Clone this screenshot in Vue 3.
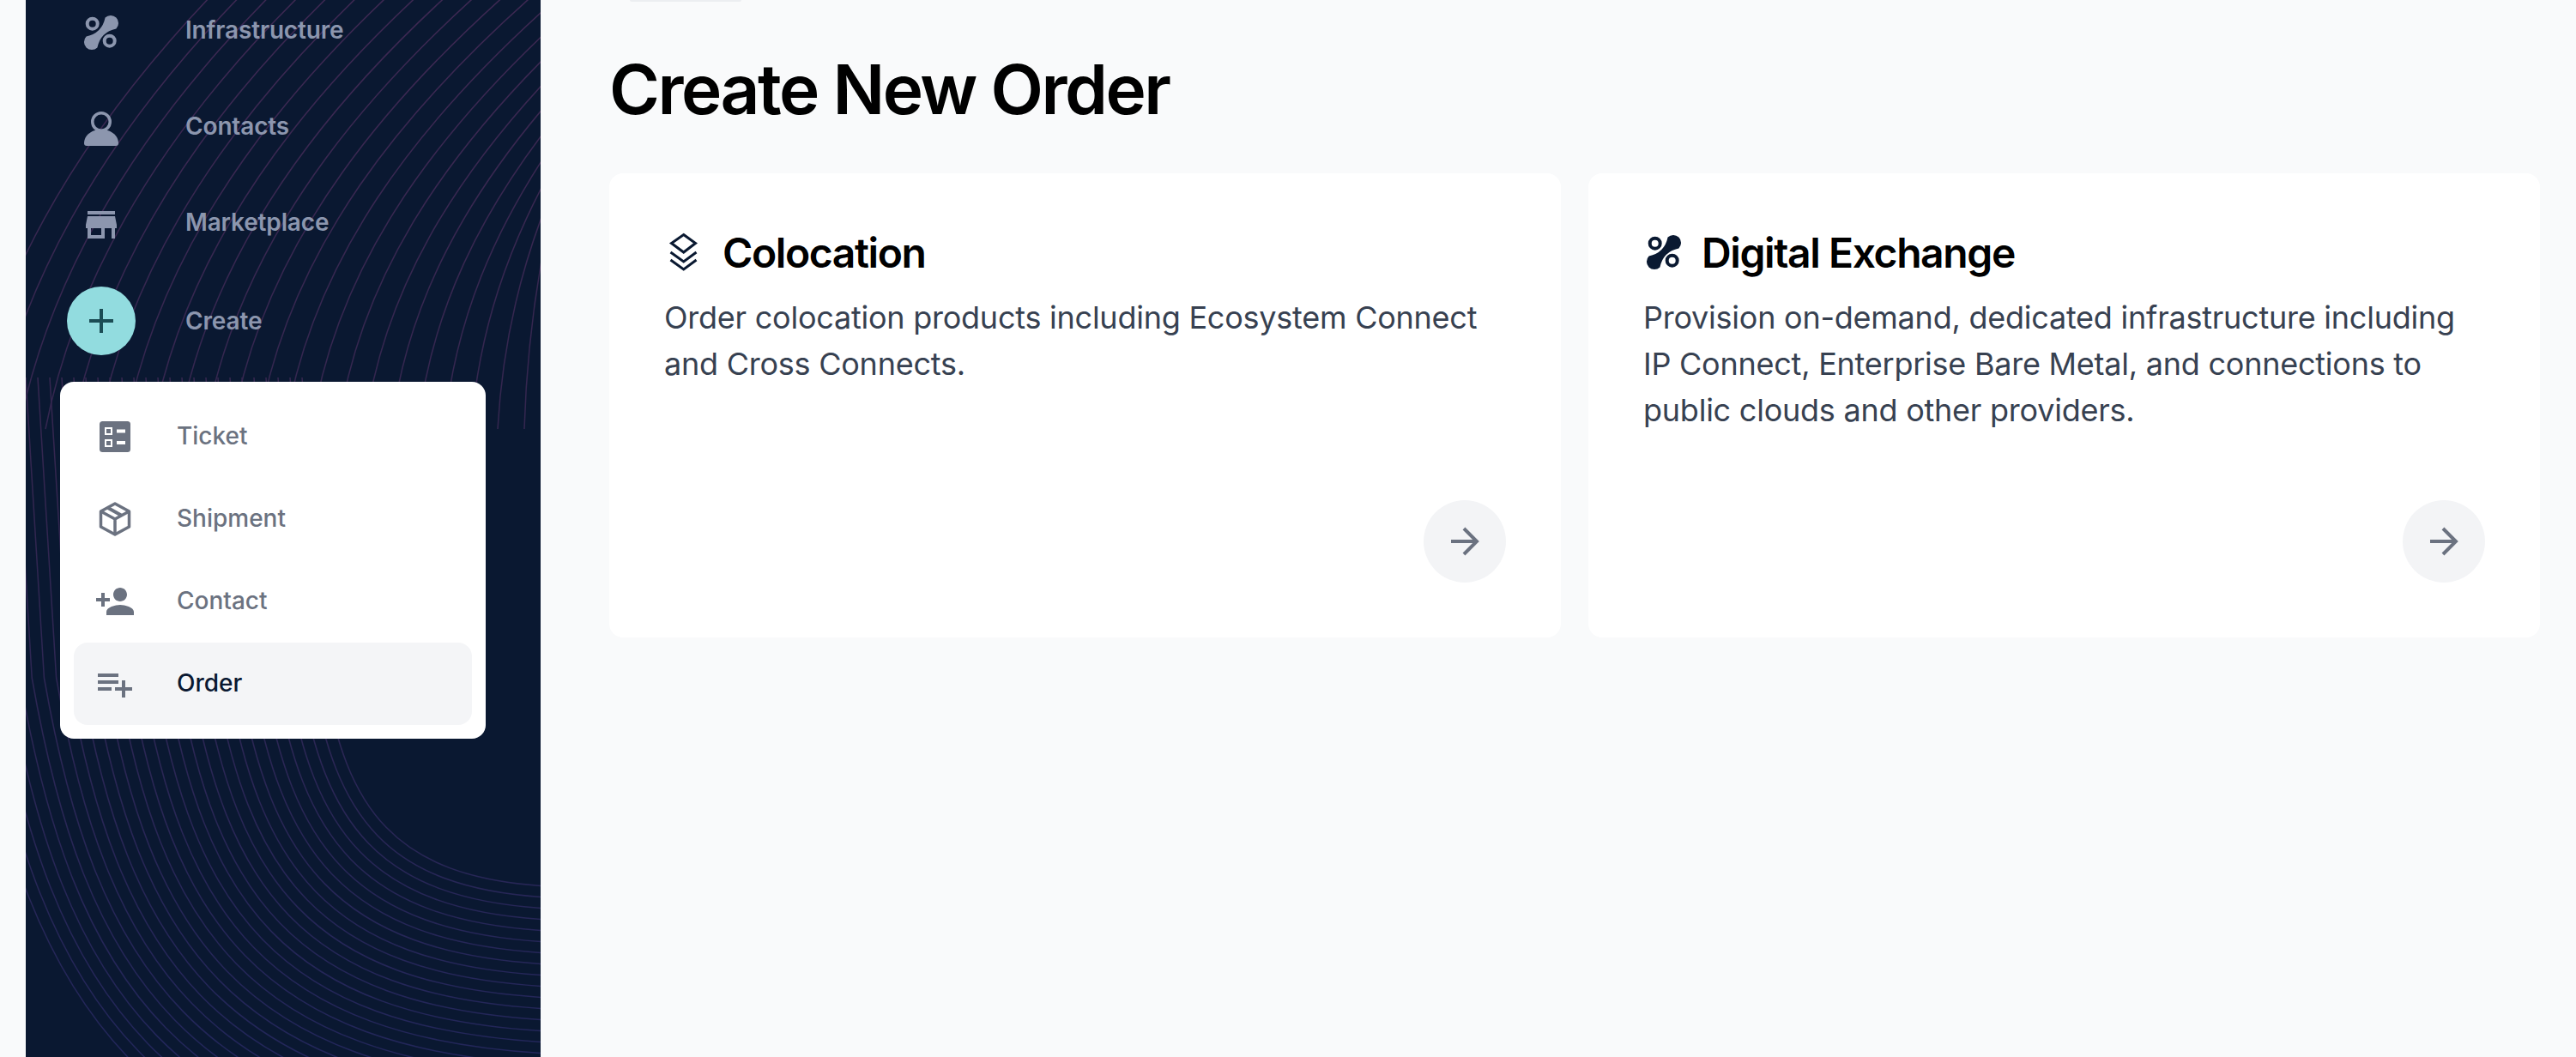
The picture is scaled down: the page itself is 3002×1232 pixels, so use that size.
<script setup>
// background lines of the sidebar, two fans of curves
const upperLines = []
for (let i = 0; i < 27; i++) {
  const xs = -40 + i * 31
  const ye = -330 + i * 28
  const dy = 500 - ye
  const dx = 640 - xs
  upperLines.push(`M${xs} 500 C${xs + dx * 0.1} ${500 - dy * 0.4} ${xs + dx * 0.5} ${ye + dy * 0.28} 640 ${ye}`)
}

const lowerLines = []
for (let j = 0; j < 30; j++) {
  const xs = 378 - j * 14.2
  const ye = 1033 + j * 13
  const dx = 640 - xs
  const dy = ye - 790
  lowerLines.push(`M${xs - 26 + j * 0.2} 440 L${xs} 790 C${xs + dx * 0.1} ${790 + dy * 0.62} ${xs + dx * 0.3} ${ye - dy * 0.04} 640 ${ye}`)
}
</script>

<template>
  <div class="page">
    <aside class="sidebar">
      <svg class="lines" width="600" height="1232" viewBox="30 0 600 1232" fill="none">
        <defs>
          <linearGradient id="lineColor" gradientUnits="userSpaceOnUse" x1="0" y1="0" x2="0" y2="1232">
            <stop offset="0" stop-color="#3d2852" />
            <stop offset="0.45" stop-color="#33264f" />
            <stop offset="1" stop-color="#22265a" />
          </linearGradient>
        </defs>
        <path v-for="(d, i) in upperLines" :key="'u' + i" :d="d" stroke="url(#lineColor)" stroke-width="1.5" />
        <path v-for="(d, i) in lowerLines" :key="'l' + i" :d="d" stroke="url(#lineColor)" stroke-width="1.5" />
      </svg>

      <nav class="nav">
        <div class="nav-row">
          <div class="nav-icon">
            <svg width="48" height="48" viewBox="0 0 48 48" fill="#8c96ae">
              <path d="M28.6 6.6A9 9 0 0 1 41.4 19.4Q23.2 23.2 19.4 41.4A9 9 0 0 1 6.6 28.6Q24.8 24.8 28.6 6.6Z" />
              <circle cx="13.7" cy="13.7" r="6" fill="none" stroke="#8c96ae" stroke-width="4" />
              <circle cx="33.7" cy="33.7" r="6" fill="none" stroke="#8c96ae" stroke-width="4" />
            </svg>
          </div>
          <span class="nav-label">Infrastructure</span>
        </div>
        <div class="nav-row">
          <div class="nav-icon">
            <svg width="48" height="48" viewBox="0 0 48 48" fill="#8c96ae">
              <circle cx="24" cy="16" r="10.250" fill="none" stroke="#8c96ae" stroke-width="3.500" />
              <path d="M4 41C4 31 14 24.7 24 24.7S44 31 44 41a3 3 0 0 1-3 3H7a3 3 0 0 1-3-3Z" />
            </svg>
          </div>
          <span class="nav-label">Contacts</span>
        </div>
        <div class="nav-row">
          <div class="nav-icon">
            <svg width="48" height="48" viewBox="0 0 24 24" fill="#8c96ae">
              <path d="M20 4H4v2h16V4zm1 10v-2l-1-5H4l-1 5v2h1v6h10v-6h4v6h2v-6h1zm-9 4H6v-4h6v4z" />
            </svg>
          </div>
          <span class="nav-label">Marketplace</span>
        </div>
        <div class="nav-row">
          <div class="create-btn">
            <svg width="48" height="48" viewBox="0 0 24 24" fill="#1b4c54">
              <path d="M19 13h-6v6h-2v-6H5v-2h6V5h2v6h6v2z" />
            </svg>
          </div>
          <span class="nav-label create-label">Create</span>
        </div>
      </nav>

      <div class="create-menu">
        <div class="menu-item">
          <svg width="48" height="48" viewBox="0 0 48 48">
            <rect x="6" y="6" width="36" height="36" rx="3.5" fill="#6b7280" />
            <rect x="13" y="14" width="7" height="7" fill="none" stroke="#fff" stroke-width="2" />
            <rect x="13" y="28" width="7" height="7" fill="none" stroke="#fff" stroke-width="2" />
            <rect x="26" y="15.5" width="10" height="4" fill="#fff" />
            <rect x="26" y="29" width="10" height="4" fill="#fff" />
          </svg>
          <span>Ticket</span>
        </div>
        <div class="menu-item">
          <svg width="48" height="48" viewBox="0 0 48 48" fill="none" stroke="#6b7280" stroke-width="3.5" stroke-linejoin="round">
            <path d="M24 6 40.5 15V33L24 42 7.500 33V15Z" />
            <path d="M7.500 15 24 24 40.500 15M24 24V42" />
            <path d="M15 10.500 32 20" stroke-width="4" />
          </svg>
          <span>Shipment</span>
        </div>
        <div class="menu-item">
          <svg width="48" height="48" viewBox="0 0 24 24" fill="#6b7280">
            <path d="M15 12c2.210 0 4-1.790 4-4s-1.790-4-4-4-4 1.790-4 4 1.790 4 4 4zm-9-2V7H4v3H1v2h3v3h2v-3h3v-2H6zm9 4c-2.670 0-8 1.340-8 4v2h16v-2c0-2.660-5.330-4-8-4z" />
          </svg>
          <span>Contact</span>
        </div>
        <div class="menu-item active">
          <svg width="48" height="48" viewBox="0 0 48 48" fill="#6b7280">
            <path d="M4 12H28V16H4ZM4 20H28V24H4ZM4 28H20V32H4ZM32 20H36V28H44V32H36V40H32V32H24V28H32Z" />
          </svg>
          <span>Order</span>
        </div>
      </div>
    </aside>

    <main class="main">
      <div class="top-stub"></div>
      <h1 class="page-title">Create New Order</h1>
      <div class="cards">
        <section class="card">
          <div class="card-head">
            <svg width="48" height="48" viewBox="0 0 48 48" fill="none" stroke="#0a1931" stroke-width="3">
              <path d="M22.700 3.500 36.500 13.500 22.700 24 8.500 13.500Z" />
              <path d="M7.500 24 22.700 35 37.500 24" />
              <path d="M7.500 33 22.700 44 37.500 33" />
            </svg>
            <h2>Colocation</h2>
          </div>
          <p>Order colocation products including Ecosystem Connect and Cross Connects.</p>
          <button class="go-btn">
            <svg width="48" height="48" viewBox="0 0 48 48" fill="none" stroke="#6b7280" stroke-width="4">
              <path d="M8 24H38M23 9 38 24 23 39" />
            </svg>
          </button>
        </section>
        <section class="card">
          <div class="card-head">
            <svg width="48" height="48" viewBox="0 0 48 48" fill="#0a1931">
              <path d="M28.6 6.6A9 9 0 0 1 41.4 19.4Q23.2 23.2 19.4 41.4A9 9 0 0 1 6.6 28.6Q24.8 24.8 28.6 6.6Z" />
              <circle cx="13.7" cy="13.7" r="6" fill="none" stroke="#0a1931" stroke-width="4" />
              <circle cx="33.7" cy="33.7" r="6" fill="none" stroke="#0a1931" stroke-width="4" />
            </svg>
            <h2>Digital Exchange</h2>
          </div>
          <p>Provision on-demand, dedicated infrastructure including IP Connect, Enterprise Bare Metal, and connections to public clouds and other providers.</p>
          <button class="go-btn">
            <svg width="48" height="48" viewBox="0 0 48 48" fill="none" stroke="#6b7280" stroke-width="4">
              <path d="M8 24H38M23 9 38 24 23 39" />
            </svg>
          </button>
        </section>
      </div>
    </main>
  </div>
</template>

<style>
html, body { margin: 0; background: #f9fafb; }
</style>

<style scoped>
.page {
  display: flex;
  height: 1232px;
  padding-left: 30px;
  overflow: hidden;
  background: #f9fafb;
  font-family: Inter, "Liberation Sans", sans-serif;
}
.sidebar {
  position: relative;
  flex: 0 0 600px;
  background: #0a1831;
  overflow: hidden;
}
.lines { position: absolute; top: 0; left: 0; }
.nav {
  position: relative;
  display: flex;
  flex-direction: column;
  gap: 32px;
  margin-top: -2px;
  padding-left: 48px;
}
.nav-row { display: flex; align-items: center; height: 80px; gap: 58px; }
.nav-icon { display: flex; justify-content: center; align-items: center; width: 80px; height: 80px; }
.nav-label {
  margin-bottom: 6px;
  font-size: 28px;
  line-height: 40px;
  font-weight: 600;
  letter-spacing: -0.15px;
  color: #8c96ae;
}
.create-label { margin-bottom: 0; }
.create-btn {
  display: flex;
  justify-content: center;
  align-items: center;
  width: 80px;
  height: 80px;
  border-radius: 50%;
  background: #92dcdf;
}
.create-menu {
  position: relative;
  width: 496px;
  margin: 31px 0 0 40px;
  padding: 16px;
  box-sizing: border-box;
  border-radius: 16px;
  background: #fff;
}
.menu-item {
  display: flex;
  align-items: center;
  gap: 48px;
  height: 96px;
  padding-left: 24px;
  border-radius: 16px;
  font-size: 28px;
  line-height: 40px;
  font-weight: 550;
  color: #6b7280;
}
.menu-item span { margin-bottom: 2px; }
.menu-item.active { background: #f4f5f7; color: #0a1831; }
.main { flex: 1; min-width: 0; padding: 0 42px 0 80px; }
.top-stub {
  width: 130px;
  height: 2px;
  margin-left: 24px;
  border-radius: 0 0 8px 8px;
  background: #eceef1;
}
.page-title {
  margin: 54px 0 50px;
  font-size: 80px;
  line-height: 96px;
  font-weight: 600;
  letter-spacing: -2.5px;
  color: #000;
}
.cards { display: grid; grid-template-columns: 1fr 1fr; gap: 32px; }
.card {
  display: flex;
  flex-direction: column;
  padding: 64px;
  border-radius: 16px;
  background: #fff;
}
.card-head { display: flex; align-items: center; gap: 20px; height: 56px; }
.card-head h2 {
  margin: 2px 0 0;
  font-size: 48px;
  line-height: 56px;
  font-weight: 600;
  letter-spacing: -1.4px;
  color: #000;
}
.card p {
  margin: 21px 0 0;
  min-height: 162px;
  font-size: 36px;
  line-height: 54px;
  font-weight: 400;
  letter-spacing: -0.24px;
  color: #374151;
}
.go-btn {
  display: flex;
  justify-content: center;
  align-items: center;
  align-self: flex-end;
  width: 96px;
  height: 96px;
  margin-top: 78px;
  padding: 0;
  border: none;
  border-radius: 50%;
  background: #f3f4f6;
}
</style>
